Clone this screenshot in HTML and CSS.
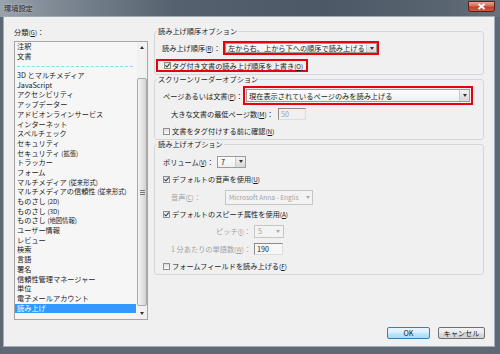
FILE: index.html
```html
<!DOCTYPE html>
<html lang="ja">
<head>
<meta charset="utf-8">
<title>環境設定</title>
<link rel="stylesheet" href="styles.css">
</head>
<body>
<div class="window">
  <div class="titlebar">
    <span class="title">環境設定</span>
    <span class="close"><svg width="9" height="7" viewBox="0 0 9 7"><path d="M1.5 1 L7.5 6 M7.5 1 L1.5 6" stroke="#fff" stroke-width="1.8"/></svg></span>
  </div>
  <div class="client">
    <div class="main">
      <div class="left">
        <div class="cat-label">分類<span class="k">(<u>G</u>)</span>：</div>
        <div class="listbox">
          <div class="items">
            <div class="item">注釈</div>
            <div class="item">文書</div>
            <div class="sep"></div>
            <div class="item">3D とマルチメディア</div>
            <div class="item">JavaScript</div>
            <div class="item">アクセシビリティ</div>
            <div class="item">アップデーター</div>
            <div class="item">アドビオンラインサービス</div>
            <div class="item">インターネット</div>
            <div class="item">スペルチェック</div>
            <div class="item">セキュリティ</div>
            <div class="item">セキュリティ <span class="k">(拡張)</span></div>
            <div class="item">トラッカー</div>
            <div class="item">フォーム</div>
            <div class="item">マルチメディア <span class="k">(従来形式)</span></div>
            <div class="item">マルチメディアの信頼性 <span class="k">(従来形式)</span></div>
            <div class="item">ものさし <span class="k">(2D)</span></div>
            <div class="item">ものさし <span class="k">(3D)</span></div>
            <div class="item">ものさし <span class="k">(地図情報)</span></div>
            <div class="item">ユーザー情報</div>
            <div class="item">レビュー</div>
            <div class="item">検索</div>
            <div class="item">言語</div>
            <div class="item">署名</div>
            <div class="item">信頼性管理マネージャー</div>
            <div class="item">単位</div>
            <div class="item">電子メールアカウント</div>
            <div class="item sel">読み上げ</div>
          </div>
          <div class="vscroll">
            <div class="sb-btn"><span class="tri-up"></span></div>
            <div class="sb-track"><div class="thumb"><span class="grip"></span></div></div>
            <div class="sb-btn down"><span class="tri-down"></span></div>
          </div>
        </div>
      </div>

      <div class="right">
        <fieldset class="group g1">
          <legend>読み上げ順序オプション</legend>
          <div class="row r1a">
            <span class="lbl w-order">読み上げ順序<span class="k">(<u>R</u>)</span>：</span>
            <div class="hl hl-order">
              <div class="combo">
                <span class="combo-text">左から右、上から下への順序で読み上げる</span>
                <span class="combo-btn"><span class="tri-down"></span></span>
              </div>
            </div>
          </div>
          <div class="row r1b">
            <div class="hl hl-tag">
              <span class="cb"><svg width="5" height="5" viewBox="0 0 5 5"><path d="M0.4 2.4 L2 4 L4.7 0.6" fill="none" stroke="#2c3b5a" stroke-width="1.1"/></svg></span>
              <span>タグ付き文書の読み上げ順序を上書き<span class="k">(<u>O</u>)</span></span>
            </div>
          </div>
        </fieldset>

        <fieldset class="group g2">
          <legend>スクリーンリーダーオプション</legend>
          <div class="row r2a">
            <span class="lbl w-page">ページあるいは文書<span class="k">(<u>P</u>)</span>：</span>
            <div class="hl hl-page">
              <div class="combo">
                <span class="combo-text">現在表示されているページのみを読み上げる</span>
                <span class="combo-btn"><span class="tri-down"></span></span>
              </div>
            </div>
          </div>
          <div class="row ind r2b">
            <span class="lbl w-min">大きな文書の最低ページ数<span class="k">(<u>M</u>)</span>：</span>
            <span class="field dis">50</span>
          </div>
          <div class="row r2c">
            <span class="cb"></span>
            <span>文書をタグ付けする前に確認<span class="k">(<u>N</u>)</span></span>
          </div>
        </fieldset>

        <fieldset class="group g3">
          <legend>読み上げオプション</legend>
          <div class="row h17 first">
            <span class="lbl w-vol">ボリューム<span class="k">(<u>V</u>)</span>：</span>
            <div class="combo c-vol">
              <span class="combo-text">7</span>
              <span class="combo-btn"><span class="tri-down"></span></span>
            </div>
          </div>
          <div class="row h18">
            <span class="cb"><svg width="5" height="5" viewBox="0 0 5 5"><path d="M0.4 2.4 L2 4 L4.7 0.6" fill="none" stroke="#2c3b5a" stroke-width="1.1"/></svg></span>
            <span>デフォルトの音声を使用<span class="k">(<u>U</u>)</span></span>
          </div>
          <div class="row ind h18">
            <span class="lbl w-voice dis">音声<span class="k">(<u>C</u>)</span>：</span>
            <div class="combo c-voice dis">
              <span class="combo-text">Microsoft Anna - Englis</span>
              <span class="combo-btn"><span class="tri-down"></span></span>
            </div>
          </div>
          <div class="row h16">
            <span class="cb"><svg width="5" height="5" viewBox="0 0 5 5"><path d="M0.4 2.4 L2 4 L4.7 0.6" fill="none" stroke="#2c3b5a" stroke-width="1.1"/></svg></span>
            <span>デフォルトのスピーチ属性を使用<span class="k">(<u>A</u>)</span></span>
          </div>
          <div class="row ind h18">
            <span class="lbl w-pitch dis">ピッチ<span class="k">(<u>I</u>)</span>：</span>
            <div class="combo c-pitch dis">
              <span class="combo-text">5</span>
              <span class="combo-btn"><span class="tri-down"></span></span>
            </div>
          </div>
          <div class="row ind h18">
            <span class="lbl w-pitch dis">1 分あたりの単語数<span class="k">(<u>W</u>)</span>：</span>
            <span class="field">190</span>
          </div>
          <div class="row h16">
            <span class="cb"></span>
            <span>フォームフィールドを読み上げる<span class="k">(<u>F</u>)</span></span>
          </div>
        </fieldset>
      </div>
    </div>
    <div class="footer">
      <button class="btn ok">OK</button>
      <button class="btn cancel">キャンセル</button>
    </div>
  </div>
</div>
</body>
</html>
```

FILE: styles.css
```css
* { box-sizing: border-box; }
html, body { margin: 0; padding: 0; }
body {
  width: 500px;
  height: 354px;
  overflow: hidden;
  font-family: "Noto Sans CJK JP", "Noto Sans", sans-serif;
  font-size: 7.2px;
  color: #1b1b1b;
  background: #5e6975;
}
.window {
  width: 500px;
  height: 354px;
  display: flex;
  flex-direction: column;
  background: #5e6975;
}
.titlebar {
  height: 17px;
  flex: none;
  display: flex;
  justify-content: space-between;
  align-items: flex-start;
  background: linear-gradient(to right, #98a2ab 0%, #7d8893 12%, #55616e 35%, #4c5866 65%, #5a6571 90%, #66717c 100%);
}
.title {
  line-height: 17px;
  padding-left: 4px;
  color: #17202b;
  text-shadow: 0 0 3px rgba(255,255,255,0.7);
}
.close {
  margin: 1px 5px 0 0;
  width: 27px;
  height: 11px;
  border: 1px solid #5a1f16;
  border-radius: 0 0 3px 3px;
  background: linear-gradient(#e8a596 0%, #d66b55 45%, #c23d26 55%, #d25b40 100%);
  display: flex;
  align-items: center;
  justify-content: center;
}
.client {
  flex: 1;
  min-height: 0;
  margin: 0 6px 8px 4px;
  background: #f0f0f0;
  box-shadow: 0 0 0 1px #a3adb6;
  padding: 10px 9px 7px 10px;
  display: flex;
  flex-direction: column;
}
.main {
  flex: 1;
  min-height: 0;
  display: flex;
  gap: 6px;
}
.k { font-size: 6.3px; }

/* left list */
.left {
  width: 134px;
  flex: none;
  display: flex;
  flex-direction: column;
}
.cat-label {
  height: 10px;
  line-height: 10px;
  white-space: nowrap;
}
.listbox {
  margin-top: 4px;
  flex: 1;
  min-height: 0;
  border: 1px solid #a5a5a5;
  background: #f6f6f6;
  display: flex;
}
.items { flex: 1; min-width: 0; }
.item {
  height: 9.7px;
  line-height: 9.7px;
  padding-left: 2px;
  white-space: nowrap;
}
.item.sel {
  background: #3399ff;
  color: #fff;
  margin-right: 1px;
}
.sep {
  height: 9.7px;
  display: flex;
  align-items: center;
  padding: 0 4px 0 2px;
}
.sep::before {
  content: "";
  flex: 1;
  border-top: 1px dashed #7fdcf3;
}
.vscroll {
  width: 10px;
  flex: none;
  display: flex;
  flex-direction: column;
  background: #f1f1f1;
}
.sb-btn {
  height: 10px;
  flex: none;
  display: flex;
  align-items: center;
  justify-content: center;
}
.sb-btn.down { height: 11px; }
.sb-track {
  flex: 1;
  padding-top: 26px;
}
.thumb {
  height: 228px;
  border: 1px solid #a9a9a9;
  border-radius: 2px;
  background: linear-gradient(to right, #f4f4f4, #e4e4e4 50%, #d3d3d3);
  display: flex;
  align-items: center;
  justify-content: center;
}
.grip {
  width: 5px;
  height: 5px;
  background: repeating-linear-gradient(to bottom, #777 0 1px, transparent 1px 2px);
}
.tri-up, .tri-down {
  width: 0;
  height: 0;
  border-left: 2.5px solid transparent;
  border-right: 2.5px solid transparent;
}
.tri-up { border-bottom: 3px solid #333; }
.tri-down { border-top: 3px solid #333; }

/* right side */
.right {
  flex: 1;
  min-width: 0;
  margin-right: 1px;
  display: flex;
  flex-direction: column;
}
fieldset.group {
  margin: 0;
  padding: 0;
  min-width: 0;
  border: 1px solid #d3d7db;
  border-radius: 3px;
}
.group legend {
  padding: 0 1px;
  margin-left: 2px;
  line-height: 9px;
}
.g2 { margin-top: 6px; padding-bottom: 2px; }
.g3 { margin-top: 5px; padding-bottom: 1px; }

.row {
  display: flex;
  align-items: center;
  padding-left: 8px;
  white-space: nowrap;
}
.row.ind { padding-left: 16px; }
.r1a { margin-top: 4px; height: 16px; padding-left: 7px; }
.r1b { margin-top: 1px; height: 17px; padding-left: 1px; }
.r2a { margin-top: 2px; height: 19px; }
.r2b { height: 18px; }
.r2c { height: 16px; }
.first { margin-top: 4px; }
.h16 { height: 16px; }
.h17 { height: 17px; }
.h18 { height: 18px; }

.lbl { flex: none; white-space: nowrap; }
.w-order { width: 61px; }
.w-page { width: 80px; }
.w-min { width: 107px; }
.w-vol { width: 54px; }
.w-voice { width: 54px; }
.w-pitch { width: 83px; text-align: right; padding-right: 3px; }
.dis { color: #a2a2a2; }

.hl {
  border: 2px solid #e8000b;
  flex: none;
}
.hl-order { width: 156px; height: 14px; }
.hl-tag {
  width: 152px;
  height: 13px;
  display: flex;
  align-items: center;
  padding-left: 6px;
}
.hl-tag .cb { margin-right: 1px; }
.hl-page { width: 230px; height: 19px; padding: 1px; }

.combo {
  width: 100%;
  height: 100%;
  display: flex;
  align-items: center;
  border: 1px solid #9c9c9c;
  background: linear-gradient(#fdfdfd, #efefef);
  flex: none;
}
.combo-text {
  flex: 1;
  min-width: 0;
  padding-left: 2px;
  line-height: 10px;
  white-space: nowrap;
  overflow: hidden;
}
.combo-btn {
  width: 10px;
  align-self: stretch;
  flex: none;
  display: flex;
  align-items: center;
  justify-content: center;
  background: linear-gradient(#f3f3f3, #d8d8d8);
  border-left: 1px solid #c9c9c9;
}
.c-vol { width: 29px; height: 12px; }
.c-vol .combo-text { padding-left: 3px; }
.c-voice { width: 88px; height: 15px; }
.c-voice .combo-text { font-size: 6.6px; }
.c-voice .combo-btn { width: 8px; }
.c-pitch { width: 30px; height: 13px; }
.combo.dis {
  border-color: #c6c6c6;
  background: #f3f3f3;
}
.combo.dis .combo-text { padding-left: 3px; }
.combo.dis .combo-btn {
  background: none;
  border-left: none;
}
.combo.dis .tri-down { border-top-color: #a9a9a9; }

.field {
  width: 29px;
  height: 12px;
  flex: none;
  border-style: solid;
  border-width: 1px;
  border-color: #8a8a8a #dcdcdc #dcdcdc #8a8a8a;
  background: #f7f7f7;
  padding-left: 2px;
  line-height: 10px;
}
.field.dis { background: #f0f0f0; width: 28px; }

.cb {
  width: 7px;
  height: 7px;
  flex: none;
  margin-right: 2px;
  border: 1px solid #8e8f8f;
  background: linear-gradient(#dedede, #fbfbfb);
  display: flex;
  align-items: center;
  justify-content: center;
}
.cb svg { display: block; }

/* footer */
.footer {
  height: 12px;
  flex: none;
  margin-top: 7px;
  display: flex;
  justify-content: flex-end;
  gap: 8px;
}
.btn {
  height: 12px;
  padding: 0;
  margin: 0;
  font-family: inherit;
  font-size: 7.2px;
  line-height: 10px;
  color: #1b1b1b;
  border-radius: 2px;
}
.btn.ok {
  width: 43px;
  border: 1px solid #3c7fb1;
  background: linear-gradient(#eaf6fd 0%, #d9f0fc 45%, #bee6fd 55%, #a7d9f5 100%);
}
.btn.cancel {
  width: 47px;
  border: 1px solid #707070;
  background: linear-gradient(#f2f2f2 0%, #ebebeb 45%, #dddddd 55%, #cfcfcf 100%);
}
```
